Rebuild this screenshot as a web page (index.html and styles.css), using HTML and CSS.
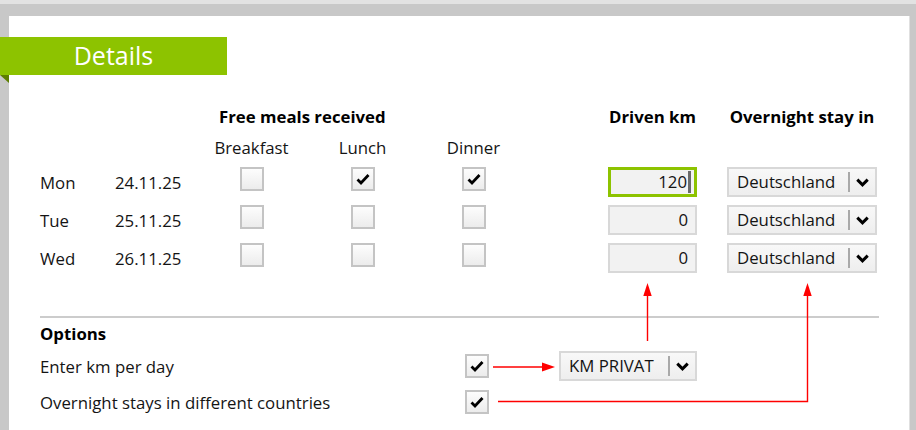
FILE: index.html
```html
<!DOCTYPE html>
<html lang="en">
<head>
    <meta charset="UTF-8">
    <meta name="viewport" content="width=device-width, initial-scale=1.0">
    <title>Details</title>
    <link rel="stylesheet" href="styles.css">
</head>
<body>
    <main class="panel">
        <h1 class="banner">Details</h1>

        <div class="days">
            <div class="hd meals">Free meals received</div>
            <div class="hd km">Driven km</div>
            <div class="hd stay">Overnight stay in</div>

            <div class="sub col-b">Breakfast</div>
            <div class="sub col-l">Lunch</div>
            <div class="sub col-d">Dinner</div>

            <!-- Monday -->
            <div class="day">Mon</div>
            <div class="date">24.11.25</div>
            <span class="check col-b"></span>
            <span class="check col-l checked"><svg viewBox="0 0 20 20"><path d="M4.5 10.5 L8 14 L15.5 6"/></svg></span>
            <span class="check col-d checked"><svg viewBox="0 0 20 20"><path d="M4.5 10.5 L8 14 L15.5 6"/></svg></span>
            <div class="field focused">120<span class="caret"></span></div>
            <div class="select stay-select"><span class="value">Deutschland</span><span class="btn"><svg viewBox="0 0 13 9"><path d="M1.3 1.6 L6.5 6.8 L11.7 1.6"/></svg></span></div>

            <!-- Tuesday -->
            <div class="day">Tue</div>
            <div class="date">25.11.25</div>
            <span class="check col-b"></span>
            <span class="check col-l"></span>
            <span class="check col-d"></span>
            <div class="field">0</div>
            <div class="select stay-select"><span class="value">Deutschland</span><span class="btn"><svg viewBox="0 0 13 9"><path d="M1.3 1.6 L6.5 6.8 L11.7 1.6"/></svg></span></div>

            <!-- Wednesday -->
            <div class="day">Wed</div>
            <div class="date">26.11.25</div>
            <span class="check col-b"></span>
            <span class="check col-l"></span>
            <span class="check col-d"></span>
            <div class="field">0</div>
            <div class="select stay-select"><span class="value">Deutschland</span><span class="btn"><svg viewBox="0 0 13 9"><path d="M1.3 1.6 L6.5 6.8 L11.7 1.6"/></svg></span></div>
        </div>

        <hr class="divider">

        <section class="options">
            <h2 class="options-title">Options</h2>

            <div class="opt-label">Enter km per day</div>
            <span class="check checked"><svg viewBox="0 0 20 20"><path d="M4.5 10.5 L8 14 L15.5 6"/></svg></span>
            <div class="select km-select"><span class="value">KM PRIVAT</span><span class="btn"><svg viewBox="0 0 13 9"><path d="M1.3 1.6 L6.5 6.8 L11.7 1.6"/></svg></span></div>

            <div class="opt-label">Overnight stays in different countries</div>
            <span class="check checked"><svg viewBox="0 0 20 20"><path d="M4.5 10.5 L8 14 L15.5 6"/></svg></span>
        </section>
    </main>

    <!-- red annotation arrows drawn over the form -->
    <svg class="arrows" width="916" height="430" viewBox="0 0 916 430">
        <g stroke="#ff0000" stroke-width="1.4" fill="none">
            <path d="M493 367 H543"/>
            <path d="M647.5 341 V294"/>
            <path d="M498 401.5 H807.5 V294"/>
        </g>
        <g fill="#ff0000">
            <polygon points="542,362.5 555,367 542,371.5"/>
            <polygon points="647.5,283 643.3,296 651.7,296"/>
            <polygon points="807.5,283 803.3,296 811.7,296"/>
        </g>
    </svg>
</body>
</html>
```

FILE: styles.css
```css
* {
    margin: 0;
    padding: 0;
    box-sizing: border-box;
    font-family: 'Open Sans', 'Noto Sans', sans-serif;
}

body {
    background-color: #c8c8c8;
    border-top: 4px solid #e2e2e2;
    height: 430px;
    overflow: hidden;
    position: relative;
    color: #141414;
    font-size: 16.8px;
}

.panel {
    background: white;
    margin: 12px 0 0 9px;
    width: 901px;
    height: 420px;
    border-right: 1px solid #e0e0e0;
    padding: 21px 0 0 31px;
}

.banner {
    position: relative;
    margin-left: -40px;
    width: 227px;
    height: 38px;
    background-color: #8dc300;
    color: white;
    font-size: 25px;
    font-weight: 400;
    line-height: 37px;
    text-align: center;
}

/* folded corner under the banner */
.banner::after {
    content: '';
    position: absolute;
    left: 0;
    top: 100%;
    border-top: 8px solid #5c7f00;
    border-left: 9px solid transparent;
}

.days {
    display: grid;
    grid-template-columns: 75px 81px 111px 111px 111px 1fr 89px 180px;
    grid-template-rows: 24px 22px 30px 30px 30px;
    row-gap: 8px;
    width: 837px;
    margin-top: 30px;
    align-items: center;
}

.hd {
    font-weight: 700;
    font-size: 16.8px;
    line-height: 24px;
    color: #000;
}

.hd.meals {
    grid-column: 3 / 6;
    padding-left: 23px;
}

.hd.km {
    grid-column: 7;
    text-align: center;
    white-space: nowrap;
}

.hd.stay {
    grid-column: 8;
    justify-self: end;
    width: 150px;
    text-align: center;
    white-space: nowrap;
}

.sub {
    text-align: center;
    line-height: 22px;
}

.col-b { grid-column: 3; }
.col-l { grid-column: 4; }
.col-d { grid-column: 5; }

.day { grid-column: 1; }
.date { grid-column: 2; }

.check {
    display: block;
    width: 24px;
    height: 24px;
    border: 2px solid #c4c4c4;
    background: linear-gradient(#fdfdfd, #ececec);
    justify-self: center;
    align-self: start;
}

.check svg {
    display: block;
    width: 20px;
    height: 20px;
}

.check path {
    fill: none;
    stroke: #000;
    stroke-width: 2.8;
}

.field {
    grid-column: 7;
    height: 30px;
    border: 2px solid #d8d8d8;
    background: #f2f2f2;
    text-align: right;
    padding-right: 7px;
    line-height: 26px;
}

.field.focused {
    border: 3px solid #8dc300;
    padding-right: 3px;
    line-height: 24px;
}

.caret {
    display: inline-block;
    width: 3px;
    height: 22px;
    margin-left: 1px;
    background: #6a6a6a;
    vertical-align: top;
    margin-top: 1px;
}

.select {
    display: flex;
    height: 30px;
    border: 2px solid #d8d8d8;
    background: linear-gradient(#f8f8f8, #eeeeee);
}

.select .value {
    flex: 1;
    padding-left: 8px;
    line-height: 26px;
    white-space: nowrap;
}

.select .btn {
    width: 27px;
    display: flex;
    align-items: center;
    justify-content: center;
    border-left: 2px solid #a9a9a9;
    margin: 3px 0;
}

.select .btn svg {
    width: 13px;
    height: 9px;
}

.select .btn path {
    fill: none;
    stroke: #000;
    stroke-width: 3;
}

.stay-select {
    grid-column: 8;
    justify-self: end;
    width: 150px;
}

.divider {
    border: none;
    height: 2px;
    background: #cccccc;
    width: 839px;
    margin-top: 43px;
}

.options {
    display: grid;
    grid-template-columns: 425px 94px 138px;
    grid-template-rows: 23px 30px 30px;
    row-gap: 6px;
    margin-top: 4px;
    align-items: center;
}

.options-title {
    grid-column: 1 / -1;
    font-size: 16.8px;
    font-weight: 700;
    line-height: 23px;
    color: #000;
}

.options .check {
    justify-self: start;
    align-self: center;
}

.km-select {
    width: 138px;
}

.arrows {
    position: absolute;
    left: 0;
    top: -4px;
    pointer-events: none;
}
```
